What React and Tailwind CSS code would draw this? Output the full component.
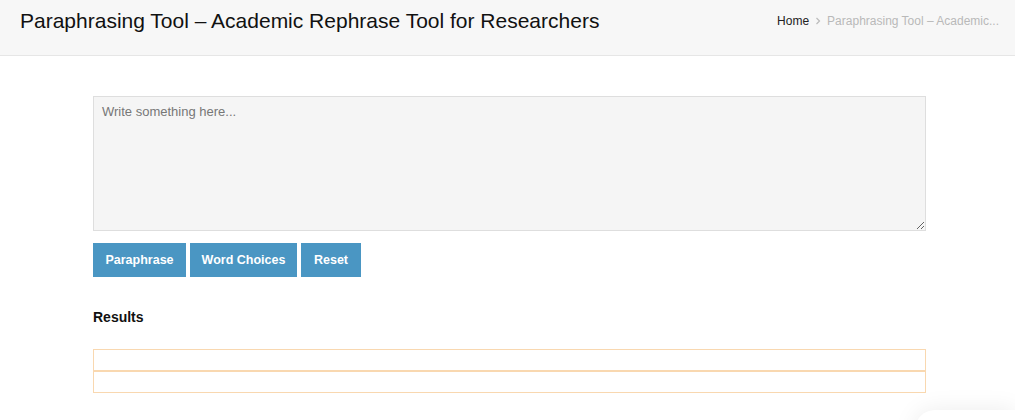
import React, { useState } from 'react'

const App = () => {
  const [text, setText] = useState('')

  const buttons = [
    { label: 'Paraphrase', w: 'w-[93px]' },
    { label: 'Word Choices', w: 'w-[107px]' },
    { label: 'Reset', w: 'w-[60px]' },
  ]

  return (
    <div className="relative min-h-[420px] overflow-hidden bg-white font-['Liberation_Sans',Arial,sans-serif]">
      {/* Page title bar */}
      <header className="flex h-[56px] items-start justify-between border-b border-[#e6e6e6] bg-[#f7f7f7] pl-5 pr-[16px]">
        <h1 className="mt-[8px] text-[21px] leading-[26px] text-[#111]">
          Paraphrasing Tool – Academic Rephrase Tool for Researchers
        </h1>
        <div className="mt-[13px] flex items-center text-[12px] leading-[16px]">
          <span className="text-[#222]">Home</span>
          <svg className="mx-[6px] h-[8px] w-[6px]" viewBox="0 0 6 8" fill="none" stroke="#bbb" strokeWidth="1.2">
            <path d="M1.5 1 L4.5 4 L1.5 7" />
          </svg>
          <span className="text-[#b9b9b9]">Paraphrasing Tool – Academic...</span>
        </div>
      </header>

      <main className="ml-[93px] w-[833px] pt-[40px]">
        <textarea
          value={text}
          onChange={(e) => setText(e.target.value)}
          placeholder="Write something here..."
          className="block h-[135px] w-full resize-y border border-[#dedede] bg-[#f5f5f5] px-[8px] py-[6px] text-[13px] leading-[18px] text-[#333] outline-none placeholder:text-[#777]"
        />

        <div className="mt-[12px] flex gap-[4px]">
          {buttons.map((b) => (
            <button
              key={b.label}
              className={`${b.w} h-[34px] bg-[#4a96c3] text-[12.5px] font-bold text-white`}
            >
              {b.label}
            </button>
          ))}
        </div>

        <h3 className="mt-[32px] text-[14px] font-bold leading-[16px] text-[#111]">Results</h3>

        <div className="mt-[24px]">
          <div className="h-[22px] border border-[#f9d8b0]" />
          <div className="h-[22px] border border-[#f9d8b0]" />
        </div>
      </main>

      {/* faint shadow of a floating widget below the fold */}
      <div className="absolute -bottom-[30px] right-0 h-[40px] w-[100px] rounded-tl-[20px] bg-white shadow-[0_0_24px_rgba(0,0,0,0.08)]" />
    </div>
  )
}

export default App
